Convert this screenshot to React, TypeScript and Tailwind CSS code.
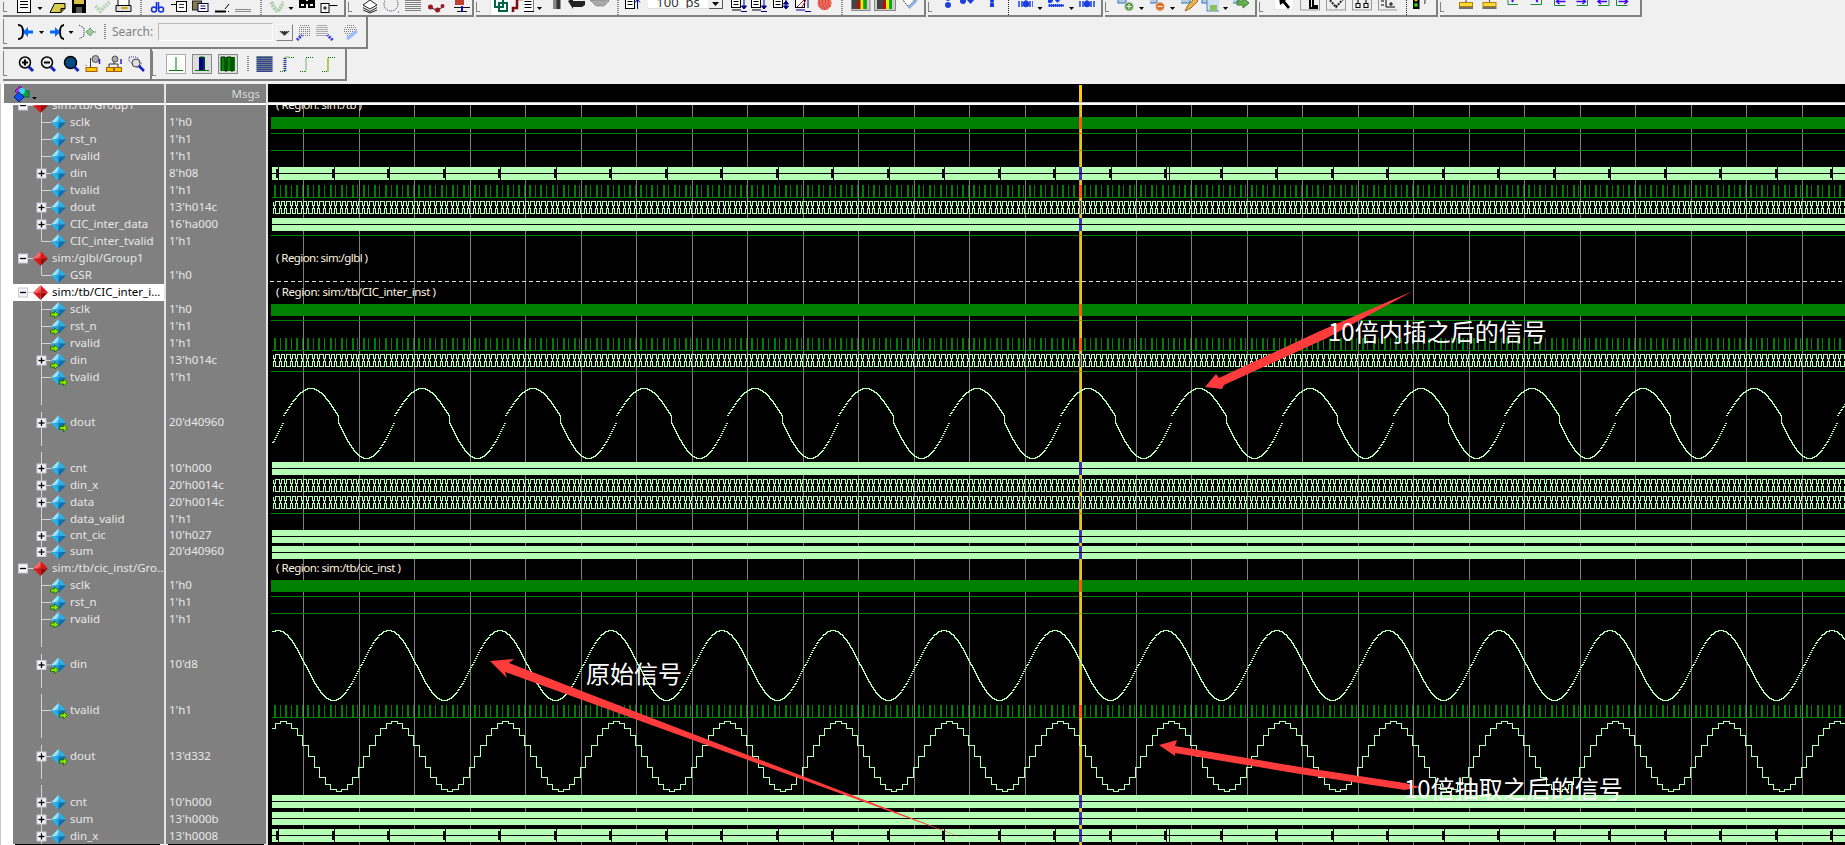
import type { ReactNode } from 'react';

const FONT = "font-['Noto_Sans',Tahoma,sans-serif]";

/* ---------- toolbar icons, 16x16 cells, drawn pixel-ish ---------- */
const glyphs: Record<string, ReactNode> = {
  drop: <path d="M5.5 7h5l-2.5 3z" fill="#000" />,
  page: <g fill="#fff" stroke="#000"><rect x="1.5" y="-3.5" width="13" height="16" /><path d="M4 1.5h8M4 4.5h8M4 7.5h8" /></g>,
  folder: <g><path d="M0.5 12.5 5 3.5h10.5v5l-4 4z" fill="#d8cc50" stroke="#000" /><path d="M11.5 12.5v-4h4" fill="#807020" stroke="#000" /></g>,
  floppy: <g><rect x="1" y="-1" width="14" height="14" fill="#000" /><rect x="3" y="-1" width="10" height="5" fill="#d8c040" /><rect x="5" y="7" width="6" height="6" fill="#555" /></g>,
  hatch: <g stroke="#b4d4b4" strokeDasharray="2 1" fill="none"><path d="M1 6l5 5 9-9" strokeWidth="4" /></g>,
  printer: <g><rect x="2.5" y="-2.5" width="11" height="11" fill="#fff" stroke="#000" /><path d="M0.5 5.5h15v6h-15z" fill="#ddd" stroke="#000" /><path d="M6 8h6" stroke="#c8a800" strokeWidth="2" /></g>,
  scissors: <g fill="none" stroke="#1030e0" strokeWidth="1.5"><circle cx="4.5" cy="9.5" r="2.5" /><circle cx="11.5" cy="9.5" r="2.5" /><path d="M7 9V2M9 9V2" /></g>,
  copy: <g fill="#fff" stroke="#000"><path d="M0 4.5h6" /><rect x="5.5" y="1.5" width="10" height="10" /><path d="M8 4.5h5M8 7.5h5" stroke="#334" /></g>,
  paste: <g><rect x="0" y="1" width="9" height="9" fill="#887a50" stroke="#222" /><rect x="5.5" y="3.5" width="10" height="8" fill="#fff" stroke="#003" /><path d="M8 6h5M8 8.5h5" stroke="#008" /></g>,
  undo: <g stroke="#000"><path d="M1 11.5h11" strokeWidth="2" /><path d="M11 9l4-5" /><path d="M14 11.5h2" strokeDasharray="1 1" /></g>,
  dots: <g stroke="#222" strokeDasharray="1 1"><path d="M0 9.5h16M0 11.5h16" /></g>,
  check: <g fill="none" stroke="#a8cca8" strokeDasharray="2 1"><path d="M2 2c2 6 5 9 6 9s4-4 6-9" strokeWidth="4" /></g>,
  binoc: <g fill="#000"><rect x="0" y="0" width="7" height="8" /><rect x="9" y="0" width="7" height="8" /><rect x="6" y="1" width="4" height="3" /><rect x="2" y="4" width="3" height="2" fill="#fff" /><rect x="11" y="4" width="3" height="2" fill="#fff" /></g>,
  boxline: <g stroke="#000" fill="#fff"><rect x="0.5" y="3.5" width="8" height="9" /><path d="M2.5 8h4M4.500 6v4M9 5.500h8" /></g>,
  stack: <g fill="#fff" stroke="#222"><path d="M1 5l7-5 7 5-7 4z" /><path d="M1 7.500l7 4 7-4M1 10l7 3 7-3" fill="none" /></g>,
  dotcirc: <g fill="none" stroke="#334" strokeDasharray="1 1"><circle cx="7" cy="4" r="7" /><path d="M14 12h2" /></g>,
  dotgrid: <g stroke="#111" strokeDasharray="1 1"><path d="M0 0.500h16M0 2.500h16M0 4.500h16M0 6.500h16M0 8.500h16M0 10.500h16" /></g>,
  nodes: <g><path d="M0 7l8 3 7-3" stroke="#111" fill="none" /><circle cx="2" cy="7" r="2.500" fill="#a01820" /><circle cx="9" cy="10" r="2.500" fill="#a01820" /><circle cx="14" cy="6" r="2" fill="#a01820" /></g>,
  redbars: <g><rect x="1" y="0" width="9" height="5" fill="#c04030" /><path d="M0 7.500h16M3 11.500h10" stroke="#111" /><path d="M8 6v6" stroke="#1010c0" strokeWidth="2" /></g>,
  link: <g><rect x="-2.500" y="-4.500" width="21" height="20" fill="#fff" stroke="#e0e0e0" /><g fill="none" stroke="#064" strokeWidth="2"><rect x="2" y="-2" width="8" height="9" /><rect x="6" y="3" width="8" height="8" /></g></g>,
  redstep: <g><path d="M2 12V8h4V-1h6" fill="none" stroke="#7a0d0d" strokeWidth="2.500" /></g>,
  lines: <g fill="#fff" stroke="#000"><rect x="1.500" y="-2.500" width="12" height="14" /><path d="M4 1.500h7M4 4.500h7M4 7.500h7" /></g>,
  blackbar: <g><rect x="5" y="-2" width="7" height="11" fill="#333" /><rect x="5" y="0" width="3" height="9" fill="#888" /></g>,
  blackarrow: <path d="M-2 1l5-3v3h12v4l-3 2H3v2z" fill="#222" />,
  grayhatch: <path d="M-2 0h20l-6 6h-8z" fill="#aaa" stroke="#666" strokeDasharray="1 1" />,
  listup: <g><rect x="0.500" y="-2.500" width="9" height="11" fill="#fff" stroke="#000" /><path d="M2.500 1.500h5M2.500 4.500h5" stroke="#000" /><path d="M12.500 9V0M10 2.500l2.500-3 2.500 3" stroke="#00a" fill="none" /></g>,
  listdown: <g><rect x="0.500" y="-2.500" width="9" height="10" fill="#fff" stroke="#000" /><path d="M2.500 1.500h5M2.500 4.500h5M1 10h9" stroke="#000" /><path d="M13 0v7M10.500 6h5l-2.500 3zM10 11.500h6" stroke="#008" fill="#008" /></g>,
  listboth: <g><rect x="0.500" y="-2.500" width="9" height="10" fill="#fff" stroke="#000" /><path d="M2.500 1.500h5M2.500 4.500h5" stroke="#000" /><path d="M13 0v9M10.500 4h5l-2.500-3zM10.500 6h5l-2.500 3z" stroke="#008" fill="#008" /></g>,
  listred: <g><rect x="0.500" y="-2.500" width="9" height="10" fill="#fff" stroke="#000" /><path d="M1 10h9M13 0v8M10 11.500h6" stroke="#008" /><path d="M2 7l9-9M7 7l5-9" stroke="#b02020" /></g>,
  redball: <g><circle cx="8" cy="3" r="7" fill="#e04030" /><path d="M1 0h14M1 2h14M1 4h14M2 6h12M3 8h10" stroke="#fff" strokeDasharray="1 2" /></g>,
  chart: <g><rect x="-3.500" y="-3.500" width="21" height="14" fill="#ccc" stroke="#888" /><rect x="-1" y="-2" width="15" height="11" fill="#444" /><rect x="5" y="1" width="3" height="8" fill="#c00" /><rect x="8" y="-2" width="3" height="11" fill="#ee0" /><rect x="11" y="-1" width="3" height="10" fill="#0a0" /><path d="M-2 -2h4" stroke="#000" /></g>,
  wrench: <g><path d="M0 -2l6 8 3-1 6-8" fill="#fff" stroke="#333" strokeDasharray="2 1" /><path d="M7 8l8-8" stroke="#8ab0e0" strokeWidth="3" /></g>,
  blue1: <g fill="#1a3fe0"><circle cx="8" cy="5" r="3" /><circle cx="8" cy="-1" r="2" /></g>,
  blue2: <g fill="#1a3fe0"><circle cx="3" cy="1" r="3" /><path d="M6-1h9l-4.500 5z" /></g>,
  blue3: <g fill="#1a3fe0"><rect x="6" y="3" width="4" height="4" /><circle cx="8" cy="1" r="2" /></g>,
  bluebars: <g stroke="#1a3fe0" strokeWidth="1.500"><path d="M1 1v6M4 1v6M12 1v6M15 1v6" /><circle cx="8" cy="4" r="2.500" fill="#1a3fe0" /><circle cx="8" cy="-1" r="1" /></g>,
  bluecomb: <g fill="#1a3fe0"><circle cx="2" cy="0" r="3" /><path d="M5-2h9l-4.500 5z" /><path d="M0 7h16v-3h-16z" stroke="#fff" strokeDasharray="1 1" /></g>,
  addgreen: <g><rect x="-2" y="-3" width="8" height="6" fill="#bcd" stroke="#27c" /><circle cx="9" cy="6.500" r="4.500" fill="#5a9a40" stroke="#ddd" /><path d="M6.500 6.500h5M9 4v5" stroke="#fff" /></g>,
  addorange: <g><rect x="-2" y="-3" width="8" height="6" fill="#bcd" stroke="#27c" /><circle cx="9" cy="6.500" r="4.500" fill="#e07028" stroke="#ddd" /><path d="M6.500 6.500h5" stroke="#fff" /></g>,
  pencil: <g><rect x="-2" y="-3" width="10" height="6" fill="#bcd" stroke="#27c" /><path d="M3 11l3-6 7-7 3 3-7 7z" fill="#e8b050" stroke="#a07020" /></g>,
  savebox: <g><rect x="-2" y="-3" width="10" height="6" fill="#bcd" stroke="#27c" /><rect x="3" y="-1" width="13" height="12" fill="#cfe0f4" stroke="#48b" /><rect x="6" y="5" width="7" height="6" fill="#8ec060" /></g>,
  greenarrow: <g><rect x="-2" y="-3" width="8" height="6" fill="#bcd" stroke="#27c" /><path d="M4 1h6V-2l6 5-6 5V5H4z" fill="#66b050" stroke="#3a7a30" /></g>,
  cursorbtn: <g><rect x="-1.500" y="-3.500" width="19" height="13" fill="#fff" stroke="#e6e6e6" /><path d="M3-3l9 1-3 3 5 6-2 2-5-6-3 2z" fill="#000" /></g>,
  framebtn: <g><rect x="-1.500" y="-3.500" width="19" height="13.500" fill="#eee" stroke="#999" /><path d="M2-2h9v8h4v2H8V0" fill="none" stroke="#000" strokeWidth="2" /></g>,
  diamondbtn: <g><rect x="-1.500" y="-3.500" width="19" height="13.500" fill="#eee" stroke="#999" /><path d="M0-2l8 9 8-9" fill="none" stroke="#222" strokeWidth="2" strokeDasharray="2 1" /></g>,
  tbtn: <g><rect x="-1.500" y="-3.500" width="19" height="13.500" fill="#eee" stroke="#999" /><path d="M4-3v6M12-3v6" stroke="#000" /><rect x="2" y="3.500" width="4" height="4" fill="none" stroke="#000" /><rect x="10" y="3.500" width="4" height="4" fill="none" stroke="#000" /></g>,
  plusbtn: <g><rect x="-1.500" y="-3.500" width="19" height="13.500" fill="#eee" stroke="#999" /><path d="M6-2v9h9M1 1h3M1 5h3M11 2v4M9 4h4" fill="none" stroke="#000" /></g>,
  traffic: <g><rect x="1" y="-2" width="7" height="11" fill="#000" /><circle cx="4.500" cy="0" r="1.500" fill="#dd0" /><circle cx="4.500" cy="5" r="2" fill="#3c3" /></g>,
  letterd: <path d="M0 -2v8l4-3V-2z" fill="none" stroke="#333" />,
  yellowT: <g><path d="M8-2v7" stroke="#444" /><rect x="1.500" y="2.500" width="13" height="4" fill="#ffd83a" stroke="#b08000" /><path d="M1 8h14" stroke="#444" strokeWidth="1.500" /></g>,
  bracketL: <g fill="none" stroke="#148a3a"><path d="M1-1v5.500h10" /><path d="M6 0l-1 2" stroke="#40f" strokeWidth="2" /></g>,
  bracketR: <g fill="none" stroke="#148a3a"><path d="M15-1v5.500H4" /><path d="M10 0l1 2" stroke="#40f" strokeWidth="2" /></g>,
  arrowL: <g fill="none"><path d="M1-1v6.500h11" stroke="#148a3a" /><path d="M12 1.500H4M6-1l-3 2.500 3 2.500" stroke="#40f" strokeWidth="1.500" /></g>,
  arrowR: <g fill="none"><path d="M15-1v6.500H4" stroke="#148a3a" /><path d="M4 1.500h8M10-1l3 2.500-3 2.500" stroke="#40f" strokeWidth="1.500" /></g>,
  arrowL2: <g fill="none"><path d="M15-1v6.500H4" stroke="#148a3a" /><path d="M13 1.500H5M7-1l-3 2.500 3 2.500" stroke="#40f" strokeWidth="1.500" /></g>,
  arrowR2: <g fill="none"><path d="M1-1v6.500h11" stroke="#148a3a" /><path d="M3 1.500h8M9-1l3 2.500-3 2.500" stroke="#40f" strokeWidth="1.500" /></g>,
  sep: <path d="M8.500 0v16" stroke="#222" strokeDasharray="1 1" />,
  joinL: <g fill="none"><path d="M0 1c4 0 5 2 5 7s-1 7-5 7" stroke="#000" strokeWidth="2" /><path d="M15 8H6" stroke="#06f" strokeWidth="3" /><path d="M10 3l-5 5 5 5z" fill="#06f" /></g>,
  joinR: <g fill="none"><path d="M16 1c-4 0-5 2-5 7s1 7 5 7" stroke="#000" strokeWidth="2" /><path d="M1 8h9" stroke="#06f" strokeWidth="3" /><path d="M6 3l5 5-5 5z" fill="#06f" /></g>,
  dotjoin: <g><path d="M0 1l5 3v8l-5 3" fill="none" stroke="#222" strokeDasharray="1 1" /><path d="M7 8l4-4 4 4-4 4z" fill="#9c9" stroke="#363" strokeDasharray="1 1" /><path d="M16 8h3" stroke="#33f" strokeDasharray="1 1" /></g>,
  findPrev: <g><path d="M3 1.500h10M2 3.500h12M2 5.500h12M2 7.500h12M2 9.500h12M2 11.500h12" stroke="#777" strokeDasharray="1 1" /><path d="M0 16l5-5" stroke="#33e" strokeWidth="3" strokeDasharray="2 1" /></g>,
  findNext: <g><path d="M1 1.500h10M0 3.500h12M0 5.500h12M0 7.500h12M0 9.500h12M0 11.500h12" stroke="#666" strokeDasharray="1 1" /><path d="M16 16l-5-5" stroke="#33e" strokeWidth="3" strokeDasharray="2 1" /></g>,
  findAll: <g><path d="M5 1.500h7M3 3.500h11M2 5.500h13M2 7.500h13M3 9.500h10M5 11.500h6" stroke="#777" strokeDasharray="1 1" /><path d="M5 15l10-8" stroke="#9bf" strokeWidth="3" /></g>,
  zoomIn: <g><circle cx="7" cy="6.500" r="5.500" fill="#eee" stroke="#000" strokeWidth="1.500" /><path d="M4 6.500h6M7 3.500v6" stroke="#000" strokeWidth="2" /><path d="M11 11l4 4" stroke="#12c" strokeWidth="3" /></g>,
  zoomOut: <g><circle cx="7" cy="6.500" r="5.500" fill="#eee" stroke="#000" strokeWidth="1.500" /><path d="M4 6.500h6" stroke="#000" strokeWidth="2" /><path d="M11 11l4 4" stroke="#12c" strokeWidth="3" /></g>,
  zoomFull: <g><circle cx="7" cy="6.500" r="6" fill="#064880" stroke="#000" strokeWidth="1.500" /><path d="M11 11l4 4" stroke="#12c" strokeWidth="3" /></g>,
  zoomT1: <g><path d="M6 2v10" stroke="#333" /><rect x="1.500" y="11.500" width="11" height="4" fill="#ffc400" stroke="#a06000" /><path d="M1.500 10V9" stroke="#a06000" /><circle cx="11" cy="3" r="3.500" fill="#aaa" stroke="#555" /><path d="M15 3v5" stroke="#22d" strokeWidth="1.500" /></g>,
  zoomT2: <g><path d="M3 8v4M12 8v4M3 8h9M8 2v6" stroke="#333" /><rect x="0.500" y="11.500" width="7" height="4" fill="#ffc400" stroke="#a06000" /><rect x="8.500" y="11.500" width="7" height="4" fill="#ffc400" stroke="#a06000" /><circle cx="9" cy="3" r="3" fill="#aaa" stroke="#555" /><path d="M15 3v5" stroke="#22d" strokeWidth="1.500" /></g>,
  zoomD: <g><path d="M1 1h8l5 7-4 4-9-7z" fill="none" stroke="#33a" strokeDasharray="1 1" /><circle cx="8" cy="7" r="4" fill="#ddd" stroke="#444" /><path d="M11 10l5 5" stroke="#12c" strokeWidth="2.500" /></g>,
  waveA: <g><rect x="-1.500" y="-1.500" width="19" height="19" fill="#fff" stroke="#aaa" /><path d="M8 1v13M1 14.500h14" stroke="#070" /></g>,
  waveB: <g><rect x="-1.500" y="-1.500" width="19" height="19" fill="#ddd" stroke="#888" /><rect x="5" y="1" width="6" height="13" fill="#008" /><path d="M6 1h4v13" fill="none" stroke="#070" /><path d="M1 14.500h14" stroke="#070" /></g>,
  waveC: <g><rect x="-1.500" y="-1.500" width="19" height="19" fill="#ddd" stroke="#888" /><rect x="1" y="1" width="14" height="14" fill="#080" /><path d="M1 15V1h4v14h2V1h4v14h2V1" fill="none" stroke="#020" /></g>,
  wavehatch: <g><rect x="0" y="0" width="16" height="16" fill="#3c3c90" /><path d="M0 .5h16M0 2.500h16M0 4.500h16M0 6.500h16M0 8.500h16M0 10.500h16M0 12.500h16M0 14.500h16" stroke="#8c8" strokeDasharray="1 1" /></g>,
  waveY: <g fill="none"><path d="M0 15.500h5V1h4" stroke="#070" strokeDasharray="1 1" /><path d="M3 15V2" stroke="#dd0" strokeDasharray="1 1" /><path d="M5 15V2" stroke="#33c" strokeWidth="3" strokeDasharray="1 1" /><path d="M9 1.500h5" stroke="#070" strokeDasharray="1 1" /></g>,
  waveG: <path d="M0 15.500h6V1.500h8" fill="none" stroke="#070" strokeDasharray="1 1" />,
  waveG2: <g fill="none"><path d="M0 15.500h6V1.500h8" stroke="#070" strokeDasharray="1 1" /><path d="M6 15V2" stroke="#bb0" /></g>,
};

type Item = [number, string];

// each glyph sits in a slot wide enough to keep its centre where the toolbar wants it
function Icons({ from, to, items, h = 16 }: { from: number; to: number; items: Item[]; h?: number }) {
  return (
    <>
      {items.map(([cx, kind], i) => {
        const left = i === 0 ? from : (items[i - 1][0] + cx) / 2;
        const right = i === items.length - 1 ? to : (items[i + 1][0] + cx) / 2;
        return (
          <svg key={i} width={right - left} height={h} viewBox={`${left - cx + 8} ${(16 - h) / 2} ${right - left} ${h}`} className="shrink-0">
            {glyphs[kind]}
          </svg>
        );
      })}
    </>
  );
}

function Grip() {
  return <span className="w-[4px] shrink-0 self-stretch mt-[2px] mb-[3px] border-l border-b border-[#808080]" />;
}

function Toolbar({ className, children }: { className: string; children: ReactNode }) {
  return <div className={`flex shrink-0 overflow-hidden border-r-2 border-b-2 border-[#808080] ${className}`}><Grip />{children}</div>;
}

function Toolbars() {
  return (
    <div className={`h-[84px] bg-[#f0f0f0] overflow-hidden ${FONT}`}>
      <div className="flex h-[17px] pl-[3px] gap-[2px]">
        <Toolbar className="w-[343px]">
          <Icons from={7} to={344} items={[[24, 'page'], [40, 'drop'], [57, 'folder'], [79, 'floppy'], [102, 'hatch'], [123, 'printer'], [140, 'sep'], [157, 'scissors'], [179, 'copy'], [200, 'paste'], [222, 'undo'], [243, 'dots'], [260, 'sep'], [277, 'check'], [291, 'drop'], [307, 'binoc'], [328, 'boxline']]} />
        </Toolbar>
        <Toolbar className="w-[126px]">
          <Icons from={352} to={472} items={[[370, 'stack'], [392, 'dotcirc'], [413, 'dotgrid'], [436, 'nodes'], [462, 'redbars']]} />
        </Toolbar>
        <Toolbar className="w-[450px]">
          <Icons from={480} to={648} items={[[501, 'link'], [519, 'redstep'], [528, 'lines'], [539, 'drop'], [556, 'blackbar'], [578, 'blackarrow'], [600, 'grayhatch'], [617, 'sep'], [633, 'listup']]} />
          <div className="w-[60px] h-[9px] bg-white border-b border-[#ddd] text-[13px] leading-[0px] text-center text-[#333] shrink-0 overflow-hidden pt-[2px] whitespace-pre">100  ps</div>
          <div className="w-[14px] h-[9px] ml-px bg-[#f0f0f0] border-b border-r border-[#555] shrink-0 overflow-hidden">
            <svg width="12" height="8" viewBox="0 0 12 8"><path d="M3 2h7l-3.500 4z" fill="#000" /></svg>
          </div>
          <Icons from={724} to={926} items={[[740, 'listdown'], [760, 'listdown'], [782, 'listboth'], [804, 'listred'], [825, 'redball'], [842, 'sep'], [861, 'chart'], [887, 'chart'], [910, 'wrench']]} />
        </Toolbar>
        <Toolbar className="w-[175px]">
          <Icons from={934} to={1104} items={[[950, 'blue1'], [970, 'blue2'], [994, 'blue3'], [1010, 'sep'], [1028, 'bluebars'], [1042, 'drop'], [1058, 'bluecomb'], [1073, 'drop'], [1089, 'bluebars']]} />
        </Toolbar>
        <Toolbar className="w-[152px]">
          <Icons from={1111} to={1258} items={[[1130, 'addgreen'], [1143, 'drop'], [1161, 'addorange'], [1174, 'drop'], [1192, 'pencil'], [1214, 'savebox'], [1227, 'drop'], [1243, 'greenarrow']]} />
        </Toolbar>
        <Toolbar className="w-[179px]">
          <Icons from={1265} to={1439} items={[[1286, 'cursorbtn'], [1312, 'framebtn'], [1338, 'diamondbtn'], [1364, 'tbtn'], [1390, 'plusbtn'], [1408, 'sep'], [1421, 'traffic'], [1431, 'letterd']]} />
        </Toolbar>
        <Toolbar className="w-[202px]">
          <Icons from={1446} to={1642} items={[[1468, 'yellowT'], [1491, 'yellowT'], [1517, 'bracketL'], [1536, 'bracketR'], [1563, 'arrowL'], [1582, 'arrowR'], [1604, 'arrowL2'], [1625, 'arrowR2']]} />
        </Toolbar>
      </div>

      <div className="flex h-[32px] pl-[3px]">
        <Toolbar className="w-[365px] items-center">
          <Icons from={7} to={112} h={24} items={[[26, 'joinL'], [41, 'drop'], [57, 'joinR'], [71, 'drop'], [87, 'dotjoin'], [104, 'sep']]} />
          <span className="text-[12px] text-[#808080] w-[46px] shrink-0">Search:</span>
          <div className="w-[115px] h-[18px] shrink-0 bg-[#f0f0f0] border border-[#bdbdbd] border-r-white border-b-white" />
          <div className="w-[17px] h-[17px] shrink-0 ml-[3px] border border-[#f8f8f8] border-r-[#808080] border-b-[#808080]">
            <svg width="15" height="15" viewBox="0 0 15 15"><path d="M2 6h11l-5.500 5z" fill="#333" stroke="#f0f0f0" strokeDasharray="1 1" /></svg>
          </div>
          <Icons from={294} to={366} h={24} items={[[306, 'findPrev'], [325, 'findNext'], [351, 'findAll']]} />
        </Toolbar>
      </div>

      <div className="flex h-[32px] pl-[3px]">
        <Toolbar className="w-[149px] items-center">
          <Icons from={7} to={150} h={24} items={[[26, 'zoomIn'], [48, 'zoomOut'], [71, 'zoomFull'], [92, 'zoomT1'], [114, 'zoomT2'], [136, 'zoomD']]} />
        </Toolbar>
        <Toolbar className="w-[195px] items-center">
          <Icons from={157} to={345} h={24} items={[[177, 'waveA'], [203, 'waveB'], [229, 'waveC'], [248, 'sep'], [265, 'wavehatch'], [289, 'waveY'], [309, 'waveG'], [331, 'waveG2']]} />
        </Toolbar>
      </div>
    </div>
  );
}

/* ---------- signal list ---------- */
type Row = { name: string; value?: string; group?: boolean; selected?: boolean; plus?: boolean; h?: number; arrow?: 'in' | 'out'; last?: boolean };

const rows: Row[] = [
  { name: 'sim:/tb/Group1', group: true },
  { name: 'sclk', value: "1'h0" },
  { name: 'rst_n', value: "1'h1" },
  { name: 'rvalid', value: "1'h1" },
  { name: 'din', value: "8'h08", plus: true },
  { name: 'tvalid', value: "1'h1" },
  { name: 'dout', value: "13'h014c", plus: true },
  { name: 'CIC_inter_data', value: "16'ha000", plus: true },
  { name: 'CIC_inter_tvalid', value: "1'h1", last: true },
  { name: 'sim:/glbl/Group1', group: true },
  { name: 'GSR', value: "1'h0", last: true },
  { name: 'sim:/tb/CIC_inter_i...', group: true, selected: true },
  { name: 'sclk', value: "1'h0", arrow: 'in' },
  { name: 'rst_n', value: "1'h1", arrow: 'in' },
  { name: 'rvalid', value: "1'h1", arrow: 'in' },
  { name: 'din', value: "13'h014c", plus: true, arrow: 'in' },
  { name: 'tvalid', value: "1'h1", arrow: 'out' },
  { name: 'dout', value: "20'd40960", plus: true, arrow: 'out', h: 74 },
  { name: 'cnt', value: "10'h000", plus: true },
  { name: 'din_x', value: "20'h0014c", plus: true },
  { name: 'data', value: "20'h0014c", plus: true },
  { name: 'data_valid', value: "1'h1" },
  { name: 'cnt_cic', value: "10'h027", plus: true, h: 16 },
  { name: 'sum', value: "20'd40960", plus: true, h: 16, last: true },
  { name: 'sim:/tb/cic_inst/Gro...', group: true },
  { name: 'sclk', value: "1'h0", arrow: 'in' },
  { name: 'rst_n', value: "1'h1", arrow: 'in' },
  { name: 'rvalid', value: "1'h1", arrow: 'in' },
  { name: 'din', value: "10'd8", plus: true, arrow: 'in', h: 74 },
  { name: 'tvalid', value: "1'h1", arrow: 'out' },
  { name: 'dout', value: "13'd332", plus: true, arrow: 'out', h: 75 },
  { name: 'cnt', value: "10'h000", plus: true },
  { name: 'sum', value: "13'h000b", plus: true },
  { name: 'din_x', value: "13'h0008", plus: true },
];

function Diamond({ x, y, red, arrow }: { x: number; y: number; red?: boolean; arrow?: 'in' | 'out' }) {
  const [a, b, c, d] = red ? ['#ff6a6a', '#e01818', '#c01010', '#9a0808'] : ['#9ae6ff', '#23b4ee', '#1890d0', '#0b6fb0'];
  return (
    <g transform={`translate(${x} ${y})`}>
      <path d="M0-7.500 7.500 0H0z" fill={b} />
      <path d="M0-7.500-7.500 0H0z" fill={a} />
      <path d="M-7.500 0 0 7.500V0z" fill={b} />
      <path d="M7.500 0 0 7.500V0z" fill={d} />
      <path d="M0-3.500 3.500 0 0 3.500-3.500 0z" fill={c} opacity="0.45" />
      {arrow === 'in' && <path d="M-8 3.500h4v-2.500l4 4-4 4V6.500h-4z" fill="#8ee000" stroke="#0a5a00" strokeWidth="0.700" />}
      {arrow === 'out' && <path d="M1 3.500h4v-2.500l4 4-4 4V6.500H1z" fill="#8ee000" stroke="#0a5a00" strokeWidth="0.700" />}
    </g>
  );
}

function Box({ x, y, plus }: { x: number; y: number; plus?: boolean }) {
  return (
    <g>
      <rect x={x - 4.500} y={y - 4.500} width="9" height="9" fill="#f4f4f8" stroke="#c8c8d8" />
      <path d={`M${x - 3} ${y}h6`} stroke="#000" strokeWidth="1.300" />
      {plus && <path d={`M${x} ${y - 3}v6`} stroke="#000" strokeWidth="1.300" />}
    </g>
  );
}

function TreeGlyph({ row }: { row: Row }) {
  const h = row.h ?? 17;
  const c = h / 2;
  if (row.group) {
    return (
      <svg width="39" height={h} viewBox={`12 0 39 ${h}`} className="shrink-0">
        <path d={`M27 ${c}h6M40.500 ${c}V${h}`} stroke="#d4d4d4" />
        <Box x={22} y={c} />
        <Diamond x={39.500} y={c} red />
      </svg>
    );
  }
  const tall = h > 17;
  const trunk = tall ? `M40.500 0v19M40.500 26v34M40.500 66V${h}` : row.last ? `M40.500 0V${c}` : `M40.500 0V${h}`;
  return (
    <svg width="57" height={h} viewBox={`12 0 57 ${h}`} className="shrink-0">
      <path d={`${trunk}M41 ${c}h9`} stroke="#d4d4d4" fill="none" />
      {row.plus && <Box x={40.500} y={c} plus />}
      <Diamond x={57.500} y={c} arrow={row.arrow} />
    </svg>
  );
}

function SignalNames() {
  return (
    <div className="w-[160px] ml-[3px] shrink-0 flex flex-col">
      <div className="h-[19px] bg-[#808080] flex items-center pl-[9px] gap-[1px] shrink-0">
        <svg width="24" height="18" viewBox="0 0 24 18">
          <path d="M7 1l5 5-5 5-5-5z" fill="#b030e0" stroke="#601080" />
          <rect x="9" y="6" width="7" height="6" fill="#10a040" stroke="#064" />
          <circle cx="9" cy="6" r="3" fill="#30e0f0" />
          <path d="M6 7l5 5-5 5-5-5z" fill="#1050f0" stroke="#082080" />
          <path d="M19 12h5l-2.500 2.500z" fill="#000" />
        </svg>
      </div>
      <div className="h-[2px] bg-white shrink-0" />
      <div className="flex-1 min-h-0 overflow-hidden flex bg-white">
        <div className="w-[9px] shrink-0" />
        <div className="flex-1 bg-[#808080] overflow-hidden">
          <div className="-mt-[8px]">
            {rows.map((row, i) => {
              const h = row.h ?? 17;
              return (
                <div key={i} className={`flex items-center ${h === 74 ? 'h-[74px]' : h === 75 ? 'h-[75px]' : h === 16 ? 'h-[16px]' : 'h-[17px]'} ${row.selected ? 'bg-white text-black' : 'text-[#e8e8e8]'}`}>
                  <TreeGlyph row={row} />
                  <span className="whitespace-nowrap text-[11.500px] leading-none pb-[2px]">{row.name}</span>
                </div>
              );
            })}
          </div>
        </div>
      </div>
      <div className="h-px bg-black ml-[11px] mr-[4px] shrink-0" />
    </div>
  );
}

function SignalValues() {
  return (
    <div className="w-[100px] shrink-0 flex flex-col">
      <div className="h-[19px] bg-[#808080] flex items-center justify-end pr-[6px] text-[11.500px] text-[#dcdcdc] shrink-0">Msgs</div>
      <div className="h-[2px] bg-white shrink-0" />
      <div className="flex-1 min-h-0 bg-[#808080] overflow-hidden">
        <div className="-mt-[8px]">
          {rows.map((row, i) => {
            const h = row.h ?? 17;
            return (
              <div key={i} className={`flex items-center pl-[3px] pb-[2px] whitespace-nowrap text-[11.500px] leading-none text-[#e8e8e8] ${h === 74 ? 'h-[74px]' : h === 75 ? 'h-[75px]' : h === 16 ? 'h-[16px]' : 'h-[17px]'}`}>
                {row.value}
              </div>
            );
          })}
        </div>
      </div>
      <div className="h-px bg-black mx-[2px] shrink-0" />
    </div>
  );
}

/* ---------- wave window, in page coordinates ---------- */
const BUS = '#b4ffb4';
const GREEN = '#008000';
const X0 = 272;
const X1 = 1845;
const CUR = 1079;

function sinePath(c: number, a: number, peak: number, jump: number) {
  let d = '';
  let prev: number | null = null;
  for (let x = X0; x < X1; x++) {
    const t = (2 * Math.PI * (x - peak)) / 111;
    const cos = Math.cos(t);
    const y = Math.round(c - a * cos - (cos > 0 ? jump * (1 - cos) : 0)) + 0.5;
    const falling = Math.sin(t) > 0;
    if (falling && prev !== null) d += `M${x} ${prev}V${y}H${x + 2}`;
    else d += `M${x} ${y}h2`;
    prev = y;
  }
  return d;
}

function stepPath(c: number, a: number, peak: number) {
  const n = Math.ceil((X0 - peak) / 5.55) - 1;
  const level = (k: number) => Math.round(c - a * Math.cos((2 * Math.PI * (k * 5.55)) / 111)) + 0.5;
  let d = `M${X0} ${level(n)}`;
  for (let k = n; peak + k * 5.55 < X1; k++) {
    d += `V${level(k)}H${Math.round(peak + (k + 0.5) * 5.55) + 0.5}`;
  }
  return d;
}

function hexPath(t: number) {
  const b = t + 12;
  let d = '';
  for (let k = 0; X0 + k * 5.55 < X1; k++) {
    const x = Math.round(X0 + k * 5.55) + 2.5;
    const nx = Math.round(X0 + (k + 1) * 5.55) + 2.5;
    // hourglass crossing, flat runs between
    d += `M${x - 1} ${t + 0.5}V${t + 3}L${x + 1} ${b - 3}V${b + 0.5}H${nx - 1}`;
    d += `M${x - 1} ${b + 0.5}V${b - 3}L${x + 1} ${t + 3}V${t + 0.5}H${nx - 1}`;
  }
  return d;
}

const ticks: [number, number][] = [];
for (let k = 0; X0 + 2 + k * 5.55 < X1; k++) ticks.push([Math.round(X0 + 2 + k * 5.55), k % 2 === 0 ? 2 : 1]);

const gridXs: number[] = [];
for (let n = 0; 303.3 + n * 55.5 < X1; n++) gridXs.push(Math.round(303.3 + n * 55.5));

const transitions: number[] = [];
for (let n = 0; 277 + n * 55.5 < X1; n++) transitions.push(Math.round(277 + n * 55.5));

function Bus({ top, marks }: { top: number; marks?: boolean }) {
  return (
    <g>
      <rect x={X0} y={top} width={X1 - X0} height="13" fill={BUS} />
      <rect x={CUR} y={top} width="3" height="13" fill="#4a2db0" />
      <rect x={X0} y={top + 6} width={X1 - X0} height="1" fill="#000" />
      {marks && transitions.map((x) => (
        <g key={x} fill="#000">
          <rect x={x - 1} y={top + 2} width="3" height="9" />
          <rect x={x + 1} y={top - 1} width="1" height="15" />
          {x === 1165 && <rect x={x + 4} y={top - 1} width="1" height="15" />}
        </g>
      ))}
    </g>
  );
}

function Ticks({ top }: { top: number }) {
  return (
    <g fill={GREEN}>
      {ticks.map(([x, w]) => <rect key={x} x={x} y={top} width={w} height="12" />)}
      <rect x={X0} y={top + 12} width={X1 - X0} height="1" />
      <rect x={CUR} y={top} width="3" height="13" fill="#ff5a00" />
    </g>
  );
}

function WaveWindow() {
  const regions: [number, string, number][] = [
    [109, '( Region: sim:/tb )', 86],
    [262, '( Region: sim:/glbl )', 92],
    [296, '( Region: sim:/tb/CIC_inter_inst )', 160],
    [572, '( Region: sim:/tb/cic_inst )', 125],
  ];
  return (
    <svg width="1577" height="761" viewBox="268 84 1577 761" className="block shrink-0 bg-black">
      <g fill="#808080" shapeRendering="crispEdges">
        {gridXs.map((x) => <rect key={x} x={x} y="105" width="1" height="740" />)}
      </g>
      <g shapeRendering="crispEdges">
        <rect x={CUR} y="105" width="3" height="740" fill="#e8c800" />
        <rect x={CUR} y="105" width="1" height="740" fill="#a8a070" />
        {[117, 304, 580].map((y) => (
          <g key={y}>
            <rect x="271" y={y} width={X1 - 271} height="12" fill={GREEN} />
            <rect x={CUR} y={y} width="3" height="12" fill="#ff5a00" />
          </g>
        ))}
        {[133, 150, 235, 320, 371, 513, 596, 613].map((y) => (
          <g key={y}>
            <rect x="271" y={y} width={X1 - 271} height="1" fill={GREEN} />
            <rect x={CUR} y={y} width="3" height="1" fill="#ff5a00" />
          </g>
        ))}
        <Ticks top={185} />
        <Ticks top={338} />
        <Ticks top={705} />
        <Bus top={167} marks />
        <Bus top={218} />
        <Bus top={462} />
        <Bus top={530} />
        <Bus top={546} />
        <Bus top={795} />
        <Bus top={812} />
        <Bus top={829} marks />
        {[201, 354, 479, 496].map((t) => (
          <g key={t}>
            <path d={hexPath(t)} fill="none" stroke={BUS} />
            <rect x={CUR + 1} y={t} width="1" height="13" fill="#4a2db0" />
          </g>
        ))}
        <path d={sinePath(423, 35, 310, 7)} fill="none" stroke={BUS} />
        <path d={sinePath(665, 35, 277, 0)} fill="none" stroke={BUS} />
        <path d={stepPath(756, 35, 283)} fill="none" stroke={BUS} />
        <path d={`M270 281.500H${X1}`} stroke="#e0e0e0" strokeDasharray="4 3" />
      </g>

      <g fill="#fff4e0" fontFamily="'Noto Sans',Tahoma,sans-serif" fontSize="11.500">
        {regions.map(([y, label, w]) => <text key={y} x="276" y={y} textLength={w}>{label}</text>)}
      </g>

      <rect x="268" y="84" width="1577" height="18" fill="#000" />
      <rect x="268" y="102" width="1577" height="1" fill="#c8c8c8" />
      <rect x="268" y="103" width="1577" height="2" fill="#fff" />
      <rect x={CUR} y="85" width="3" height="17" fill="#ffcc00" />

      {/* hand-drawn annotations */}
      <g fill="#ff3b3b">
        <path d="M1205 387 1216 374 1219 378 1320 331 1413 291 1327 338 1224 385 1222 389z" />
        <path d="M490 661 507 678 505 672 966 839 509 663 514 659z" />
        <path d="M1159 745 1177 740 1175 746 1300 767 1405 783 1420 787 1405 790 1300 774 1175 753 1175 756z" />
      </g>
      <g fill="#fff" fontFamily="'Noto Sans CJK SC',sans-serif" fontSize="24">
        <text x="1328" y="341">10倍内插之后的信号</text>
        <text x="586" y="683">原始信号</text>
        <text x="1404" y="798">10倍抽取之后的信号</text>
      </g>
    </svg>
  );
}

export default function App() {
  return (
    <div className={`w-[1845px] h-[845px] overflow-hidden bg-white flex flex-col ${FONT}`}>
      <Toolbars />
      <div className="flex flex-1 min-h-0">
        <div className="w-px bg-[#c8c8c8] shrink-0" />
        <SignalNames />
        <div className="w-[2px] bg-[#e4e4e4] shrink-0" />
        <SignalValues />
        <div className="w-[2px] bg-[#e4e4e4] shrink-0" />
        <WaveWindow />
      </div>
    </div>
  );
}
